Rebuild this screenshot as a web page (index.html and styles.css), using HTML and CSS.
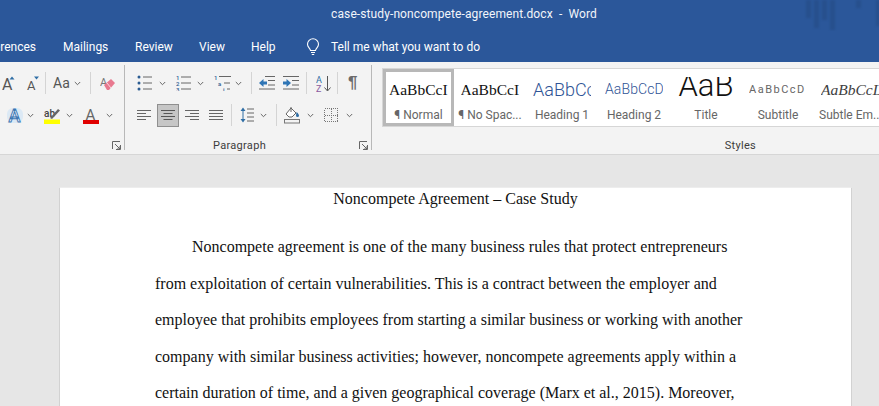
FILE: index.html
```html
<!DOCTYPE html>
<html lang="en">
<head>
<meta charset="utf-8">
<title>case-study-noncompete-agreement.docx - Word</title>
<link rel="stylesheet" href="styles.css">
</head>
<body>
<header class="chrome">
  <div class="titlebar">case-study-noncompete-agreement.docx&nbsp; -&nbsp; Word
    <div class="deco"><i class="d1"></i><i class="d2"></i><i class="d3"></i><i class="d4"></i><i class="d5"></i><i class="d6"></i></div>
  </div>
  <nav class="tabs">
    <span class="tab t-ref">erences</span><span class="tab t-mail">Mailings</span><span class="tab t-rev">Review</span><span class="tab t-view">View</span><span class="tab t-help">Help</span>
    <svg class="bulb" width="16" height="18" viewBox="0 0 16 18" fill="none" stroke="#fff" stroke-width="1.1"><path d="M5.5 12.5C5 10 2.5 9.300 2.500 6.300a5.500 5.500 0 0 1 11 0c0 3-2.500 3.700-3 6.200z"/><path d="M6 14.500h4M6.800 16.500h2.400"/></svg>
    <span class="tell">Tell me what you want to do</span>
  </nav>
</header>
<section class="ribbon">
  <div class="group g-font">
    <div class="rows">
      <div class="row r1">
        <svg class="ic" width="13" height="17" viewBox="0 0 13 17"><text x="0" y="15" class="gl">A</text><path d="M7.500 4.500l2.500-3 2.500 3z" fill="#2f6ea5"/></svg>
        <svg class="ic i-shrink" width="14" height="17" viewBox="0 0 14 17"><text x="1" y="15" class="gls">A</text><path d="M8 1.500h5l-2.500 3z" fill="#2f6ea5"/></svg>
        <i class="sep s1"></i>
        <span class="aa">Aa</span><svg class="chev c-aa" width="7" height="5" viewBox="0 0 7 5"><path d="M.8 1l2.700 2.700L6.200 1" fill="none" stroke="#666"/></svg>
        <i class="sep s2"></i>
        <svg class="ic i-clear" width="17" height="17" viewBox="0 0 17 17"><text x="0" y="11" class="glc">A</text><path d="M4 10l7-6 4 4-6 7H7z" fill="#e8798f"/><path d="M7 8l4 5" stroke="#fbd5dc"/></svg>
      </div>
      <div class="row r2">
        <svg class="ic i-effect" width="18" height="19" viewBox="0 0 18 19"><rect x="1" y="2" width="16" height="15" rx="6" fill="#dce9f5"/><text x="2.500" y="15.500" class="gle">A</text></svg>
        <svg class="chev c-e" width="7" height="5" viewBox="0 0 7 5"><path d="M.8 1l2.700 2.700L6.200 1" fill="none" stroke="#666"/></svg>
        <svg class="ic i-hl" width="18" height="19" viewBox="0 0 18 19"><text x="1" y="11" class="glh">ab</text><path d="M7 12l8-9 2 1.500-8 8.500z" fill="#666"/><rect x="1" y="13.500" width="16" height="4.500" fill="#ffff00"/></svg>
        <svg class="chev c-h" width="7" height="5" viewBox="0 0 7 5"><path d="M.8 1l2.700 2.700L6.200 1" fill="none" stroke="#666"/></svg>
        <svg class="ic i-col" width="17" height="19" viewBox="0 0 17 19"><text x="2.500" y="13.500" class="gla">A</text><rect x="0" y="14" width="16" height="4" fill="#e00000"/></svg>
        <svg class="chev c-c" width="7" height="5" viewBox="0 0 7 5"><path d="M.8 1l2.700 2.700L6.200 1" fill="none" stroke="#666"/></svg>
      </div>
    </div>
    <svg class="launcher" width="9" height="9" viewBox="0 0 9 9" fill="none" stroke="#666"><path d="M.5 8V.5H8M8.500 4v4.500H4M3 3l5 5M5 8h3V5"/></svg>
  </div>
  <div class="group g-para">
    <div class="rows">
      <div class="row r1">
        <svg class="ic" width="15" height="16" viewBox="0 0 15 16"><g fill="#2b5c92"><circle cx="2" cy="2" r="1.500"/><circle cx="2" cy="8" r="1.500"/><circle cx="2" cy="14" r="1.500"/></g><path d="M6 2h9M6 8h9M6 14h9" stroke="#666"/></svg>
        <svg class="chev c-l1" width="7" height="5" viewBox="0 0 7 5"><path d="M.8 1l2.700 2.700L6.200 1" fill="none" stroke="#666"/></svg>
        <svg class="ic i-num" width="15" height="16" viewBox="0 0 15 16"><g fill="#2b5c92" class="numg"><text x="0" y="5">1</text><text x="0" y="11">2</text><text x="0" y="16.500">3</text></g><path d="M5 2h10M5 8h10M5 14h10" stroke="#666"/></svg>
        <svg class="chev c-l2" width="7" height="5" viewBox="0 0 7 5"><path d="M.8 1l2.700 2.700L6.200 1" fill="none" stroke="#666"/></svg>
        <svg class="ic i-multi" width="17" height="16" viewBox="0 0 17 16"><g fill="#2b5c92" class="numg"><text x="0" y="5">1</text><text x="4" y="11">a</text><text x="9" y="16.500">i</text></g><path d="M5 1.500h12M10 8h6M13 14h3" stroke="#666"/></svg>
        <svg class="chev c-l3" width="7" height="5" viewBox="0 0 7 5"><path d="M.8 1l2.700 2.700L6.200 1" fill="none" stroke="#666"/></svg>
        <i class="sep s3"></i>
        <svg class="ic i-out" width="16" height="14" viewBox="0 0 16 14"><path d="M6 .5h10M9 4.500h7M9 9h7M0 13h16" stroke="#666"/><path d="M0 7l4.500-4v2.500H8v3H4.500V11z" fill="#2f75b5"/></svg>
        <svg class="ic i-in" width="16" height="14" viewBox="0 0 16 14"><path d="M0 .5h16M9 4.500h7M9 9h7M0 13h16" stroke="#666"/><path d="M8 7L3.500 3v2.500H0v3h3.500V11z" fill="#2f75b5"/></svg>
        <i class="sep s4"></i>
        <svg class="ic i-sort" width="16" height="17" viewBox="0 0 16 17" fill="none"><text x="0" y="7.500" class="gsa">A</text><text x="0" y="16.500" class="gsz">Z</text><path d="M11.500 1v14.500M8.500 12.500l3 3.500 3-3.500" stroke="#555"/></svg>
        <i class="sep s5"></i>
        <span class="pil">¶</span>
      </div>
      <div class="row r2">
        <svg class="ic" width="14" height="11" viewBox="0 0 14 11"><path d="M0 .5h14M0 3.500h9M0 6.500h14M0 9.500h9" stroke="#666"/></svg>
        <span class="active"><svg width="14" height="11" viewBox="0 0 14 11"><path d="M0 .5h14M2.500 3.500h9M0 6.500h14M2.500 9.500h9" stroke="#555"/></svg></span>
        <svg class="ic i-ar" width="14" height="11" viewBox="0 0 14 11"><path d="M0 .5h14M5 3.500h9M0 6.500h14M5 9.500h9" stroke="#666"/></svg>
        <svg class="ic i-j" width="14" height="11" viewBox="0 0 14 11"><path d="M0 .5h14M0 3.500h14M0 6.500h14M0 9.500h14" stroke="#666"/></svg>
        <i class="sep s6"></i>
        <svg class="ic i-ls" width="14" height="16" viewBox="0 0 14 16"><path d="M3 2v12" stroke="#2f6ea5"/><path d="M.5 4L3 .5 5.500 4zM.5 12L3 15.500 5.500 12z" fill="#2f6ea5"/><path d="M7 2h7M7 6h7M7 10h7M7 14h7" stroke="#666"/></svg>
        <svg class="chev c-ls" width="7" height="5" viewBox="0 0 7 5"><path d="M.8 1l2.700 2.700L6.200 1" fill="none" stroke="#666"/></svg>
        <i class="sep s7"></i>
        <svg class="ic i-shade" width="17" height="18" viewBox="0 0 17 18" fill="none"><path d="M2 8l5-6 5 5-4 4H5z" fill="#fff" stroke="#666"/><path d="M7 1v5" stroke="#666"/><path d="M12.500 6c2 1.500 2.500 3 2.500 3.500a1.500 1.500 0 0 1-3 0c0-1 .5-2.500.5-3.500z" fill="#2f6ea5"/><rect x=".5" y="13.500" width="15" height="3.500" stroke="#777" fill="#f3f3f3"/></svg>
        <svg class="chev c-sh" width="7" height="5" viewBox="0 0 7 5"><path d="M.8 1l2.700 2.700L6.200 1" fill="none" stroke="#666"/></svg>
        <svg class="ic i-bd" width="14" height="14" viewBox="0 0 14 14" fill="none" stroke="#777" stroke-dasharray="1 1" shape-rendering="crispEdges"><path d="M.5.500h13v13H.5zM7.500.5v13M.5 7.500h13"/></svg>
        <svg class="chev c-bd" width="7" height="5" viewBox="0 0 7 5"><path d="M.8 1l2.700 2.700L6.200 1" fill="none" stroke="#666"/></svg>
      </div>
    </div>
    <div class="glabel gl-para">Paragraph</div>
    <svg class="launcher" width="9" height="9" viewBox="0 0 9 9" fill="none" stroke="#666"><path d="M.5 8V.5H8M8.500 4v4.500H4M3 3l5 5M5 8h3V5"/></svg>
  </div>
  <div class="group g-styles">
    <div class="gallery">
      <div class="style sel"><span class="pv pv-n">AaBbCcI</span><span class="nm">¶ Normal</span></div>
      <div class="style"><span class="pv pv-n">AaBbCcI</span><span class="nm">¶ No Spac...</span></div>
      <div class="style"><span class="pv pv-h1">AaBbCc</span><span class="nm">Heading 1</span></div>
      <div class="style"><span class="pv pv-h2">AaBbCcD</span><span class="nm">Heading 2</span></div>
      <div class="style"><span class="pv pv-t">AaB</span><span class="nm">Title</span></div>
      <div class="style"><span class="pv pv-s">AaBbCcD</span><span class="nm">Subtitle</span></div>
      <div class="style last"><span class="pv pv-e">AaBbCcL</span><span class="nm">Subtle Em...</span></div>
    </div>
    <div class="glabel gl-styles">Styles</div>
  </div>
</section>
<main class="canvas">
  <article class="page">
    <h1 class="doc-title">Noncompete Agreement – Case Study</h1>
    <p class="doc-line first">Noncompete agreement is one of the many business rules that protect entrepreneurs</p>
    <p class="doc-line">from exploitation of certain vulnerabilities. This is a contract between the employer and</p>
    <p class="doc-line">employee that prohibits employees from starting a similar business or working with another</p>
    <p class="doc-line">company with similar business activities; however, noncompete agreements apply within a</p>
    <p class="doc-line">certain duration of time, and a given geographical coverage (Marx et al., 2015). Moreover,</p>
  </article>
</main>
</body>
</html>
```
FILE: styles.css
```css
* { box-sizing: border-box; }
html, body { margin: 0; height: 100%; overflow: hidden; }
body { width: 879px; height: 406px; background: #e6e6e6; font-family: Roboto, "Liberation Sans", sans-serif; display: flex; flex-direction: column; overflow: hidden; }
.chrome { background: #2b579a; color: #fff; height: 62px; flex: none; }
.titlebar { height: 31px; padding: 6px 0 0 49px; text-align: center; font-size: 12px; line-height: 17px; letter-spacing: .1px; position: relative; color: #f2f5fa; overflow: hidden; }
.deco { position: absolute; left: 806px; top: 0; display: flex; gap: 3px; align-items: flex-start; }
.deco i { display: block; width: 5px; background: #27508d; filter: blur(1px); }
.d1 { height: 18px; } .d2 { height: 28px; } .d3 { height: 20px; } .d4 { height: 30px; margin-right: 18px; } .d5 { height: 8px; margin-right: 12px; } .deco .d6 { height: 26px; width: 4px; }
.tabs { height: 31px; display: flex; align-items: center; font-size: 12px; position: relative; overflow: hidden; }
.tab { display: block; white-space: nowrap; flex: none; }
.t-ref { width: 63px; padding-right: 27px; display: flex; justify-content: flex-end; overflow: hidden; }
.t-mail { width: 72px; }
.t-rev { width: 64px; }
.t-view { width: 52px; }
.t-help { width: 54px; }
.bulb { margin-right: 10px; flex: none; }
.tell { white-space: nowrap; }

.ribbon { height: 93px; flex: none; background: #f3f3f3; border-bottom: 1px solid #d6d6d6; display: flex; }
.group { position: relative; height: 85px; margin-top: 3px; border-right: 1px solid #b8b8b8; flex: none; }
.g-font { width: 125px; }
.g-para { width: 247px; }
.g-styles { flex: 1; min-width: 0; border-right: 0; }
.rows { display: flex; flex-direction: column; }
.row { display: flex; align-items: center; height: 30px; }
.r1 { margin-top: 3px; }
.r2 { margin-top: 2px; }
.ic, .chev { flex: none; display: block; }
.sep { display: block; flex: none; width: 1px; height: 22px; background: #d4d4d4; }
svg text { font-family: Roboto, "Liberation Sans", sans-serif; }
.gl { font-size: 16px; fill: #555; }
.gls { font-size: 13px; fill: #555; }
.glc { font-size: 11px; fill: #777; }
.gle { font-size: 18px; fill: #eef4fa; stroke: #3c76b2; stroke-width: .9; font-weight: 500; }
.glh { font-size: 10px; fill: #444; font-weight: 500; }
.gla { font-size: 15px; fill: #666; }
.gsa { font-size: 9px; fill: #2f6ea5; }
.gsz { font-size: 9px; fill: #8a5aa0; }
.numg text { font-size: 6px; font-weight: 500; }
.launcher { position: absolute; right: 3px; bottom: 0; }

/* Font group placement */
.g-font .r1 { padding-left: 2px; }
.i-shrink { margin-left: 11px; }
.s1 { margin-left: 5px; }
.aa { margin-left: 7px; font-size: 14px; color: #555; width: 17px; flex: none; }
.c-aa { margin-left: 4px; }
.s2 { margin-left: 9px; }
.i-clear { margin-left: 9px; }
.g-font .r2 { padding-left: 6px; }
.c-e { margin-left: 3px; }
.i-hl { margin-left: 9px; }
.c-h { margin-left: 5px; }
.i-col { margin-left: 10px; }
.c-c { margin-left: 6px; }

/* Paragraph group placement */
.g-para .r1 { padding-left: 12px; }
.c-l1 { margin-left: 7px; }
.i-num { margin-left: 10px; }
.c-l2 { margin-left: 6px; }
.i-multi { margin-left: 10px; }
.c-l3 { margin-left: 4px; }
.s3 { margin-left: 9px; }
.i-out { margin-left: 7px; }
.i-in { margin-left: 8px; }
.s4 { margin-left: 7px; }
.i-sort { margin-left: 9px; }
.s5 { margin-left: 5px; }
.pil { margin-left: 10px; font-size: 17px; font-weight: 700; line-height: 20px; color: #6a6a6a; font-family: "Liberation Sans", sans-serif; }
.g-para .r2 { padding-left: 12px; }
.active { width: 22px; height: 23px; margin-left: 6px; background: #c6c6c6; border: 1px solid #8f8f8f; display: flex; align-items: center; justify-content: center; flex: none; }
.i-ar { margin-left: 6px; }
.i-j { margin-left: 10px; }
.s6 { margin-left: 8px; }
.i-ls { margin-left: 8px; }
.c-ls { margin-left: 6px; }
.s7 { margin-left: 9px; }
.i-shade { margin-left: 7px; }
.c-sh { margin-left: 6px; }
.i-bd { margin-left: 10px; }
.c-bd { margin-left: 8px; }

.glabel { position: absolute; left: 0; right: 0; bottom: -3px; text-align: center; font-size: 11px; line-height: 15px; color: #3c3c3c; letter-spacing: .3px; }
.gl-para { right: 17px; }
.gl-styles { left: auto; right: 123px; text-align: right; }

.gallery { margin: 3px 0 0 10px; height: 59px; background: #fff; border: 1px solid #d6d6d6; border-right: 0; display: flex; overflow: hidden; }
.style { width: 72px; flex: none; height: 57px; display: flex; flex-direction: column; align-items: center; overflow: hidden; white-space: nowrap; padding-top: 4px; }
.style.sel { width: 71px; border: 3px solid #b8b8b8; padding-top: 1px; }
.style.last { width: 65px; align-items: flex-start; padding-left: 7px; }
.last .nm { margin-left: -2px; }
.pv { display: block; flex: none; height: 33px; line-height: 33px; width: 58px; overflow: hidden; text-align: left; }
.nm { font-size: 12px; line-height: 18px; color: #666; display: block; flex: none; }
.pv-n { font-family: "Liberation Serif", serif; font-size: 15.500px; color: #111; width: 59px; }
.pv-h1 { font-size: 18px; font-weight: 300; color: #2f5496; }
.pv-h2 { font-size: 14px; font-weight: 300; color: #2f5496; letter-spacing: .1px; }
.pv-t { font-size: 31px; color: #111; font-weight: 300; height: 29px; line-height: 18px; margin-top: 4px; text-align: center; }
.pv-s { font-size: 11px; color: #666; letter-spacing: 1.500px; }
.pv-e { font-family: "Liberation Serif", serif; font-size: 15.500px; font-style: italic; color: #404040; }

.canvas { flex: 1; min-height: 0; padding: 33px 28px 0 60px; overflow: hidden; }
.page { background: #fff; height: 300px; padding-left: 95px; font-family: "Liberation Serif", serif; font-size: 16px; color: #111; box-shadow: -1px 0 0 #d2d2d2, 1px 0 0 #d2d2d2, 0 -1px 0 #ededed; }
.doc-title { margin: 0; height: 21px; text-align: center; font-weight: 400; font-size: 16px; line-height: 21px; padding-right: 95px; }
.doc-line { margin: 0; height: 36.600px; line-height: 36.600px; white-space: nowrap; }
.doc-line.first { margin-top: 20px; padding-left: 37px; }
```
